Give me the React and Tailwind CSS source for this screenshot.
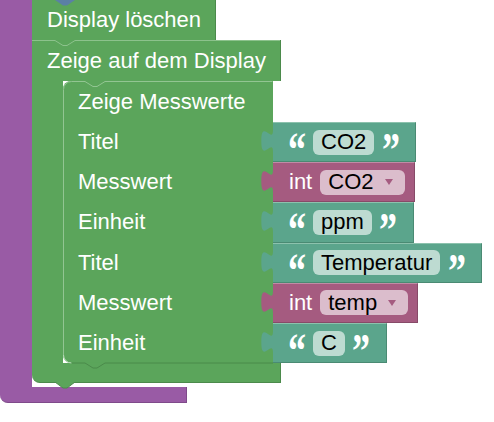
import React from "react";

// Blockly-Arbeitsfläche: verschachtelte Blöcke
const Tab = ({ fill }) => (
  <svg
    className="absolute left-[-12px] top-[7px] overflow-visible"
    width="13"
    height="23"
  >
    <path d="M12,0 c0,14.7 -11.7,-11.7 -11.7,11 s11.7,-3.7 11.7,11 Z" fill={fill} />
  </svg>
);

const Quote = ({ children, w }) => (
  <span className={`flex justify-center ${w}`}>
    <span className="inline-block scale-x-75 translate-y-[8px] font-['Liberation_Serif',serif] text-[48px] font-bold leading-none">
      {children}
    </span>
  </span>
);

const TextBlock = ({ text }) => (
  <div className="relative flex h-[40.2px] items-center border-y border-r border-t-[#8cc2ad] border-b-[#4a8a73] border-r-[#4a8a73] bg-[#5ba58c] pl-[17px] pr-[17px]">
    <Tab fill="#5ba58c" />
    <Quote w="w-[13px]">“</Quote>
    <span className="ml-[10px] flex h-[25px] items-center rounded-[6px] bg-[#bddbd1] px-[8px] text-black">
      {text}
    </span>
    <span className="ml-[9px]">
      <Quote w="w-[15px]">”</Quote>
    </span>
  </div>
);

const VarBlock = ({ text }) => (
  <div className="relative flex h-[40.2px] items-center border-y border-r border-t-[#c08ca6] border-b-[#874a68] border-r-[#874a68] bg-[#a55b80] pl-[16px] pr-[9px]">
    <Tab fill="#a55b80" />
    <span>int</span>
    <span className="ml-[8px] flex h-[25px] items-center rounded-[6px] bg-[#dbbdcc] pl-[8px] pr-[12px] text-black">
      {text}
      <svg className="ml-[11px]" width="8" height="6">
        <path d="M0,0 H8 L4,6 Z" fill="#a55b80" />
      </svg>
    </span>
  </div>
);

const rows = [
  { label: "Titel", kind: "text", value: "CO2" },
  { label: "Messwert", kind: "var", value: "CO2" },
  { label: "Einheit", kind: "text", value: "ppm" },
  { label: "Titel", kind: "text", value: "Temperatur" },
  { label: "Messwert", kind: "var", value: "temp" },
  { label: "Einheit", kind: "text", value: "C" },
];

export default function App() {
  return (
    <div className="relative h-[422px] w-[494px] overflow-hidden bg-white font-['Liberation_Sans',Arial,sans-serif] text-[22px] leading-none text-white">
      <div className="flex w-max flex-col">
        <div className="flex">
          <div className="w-[32px] shrink-0 bg-[#995ba5]" />
          <div className="flex flex-col">
            {/* Display löschen */}
            <div className="relative flex h-[40px] w-[184px] items-center border-r border-[#4b8a4b] bg-[#5ba55b] pl-[15px]">
              Display löschen
              <svg className="absolute left-[23px] top-0" width="20" height="6">
                <polygon points="0,0 20,0 12,5.5 8,5.5" fill="#5b80a5" />
              </svg>
            </div>

            {/* Zeige auf dem Display */}
            <div className="relative flex flex-col">
              <div className="flex h-[41px] w-[249px] items-center border-r border-[#4b8a4b] bg-[#5ba55b] pl-[15px]">
                Zeige auf dem Display
              </div>
              <div className="flex">
                <div className="w-[31px] shrink-0 bg-[#5ba55b]" />
                <div className="relative flex flex-col">
                  <div className="flex h-[41px] w-[210px] items-center rounded-tl-[8px] bg-[#5ba55b] pl-[15px]">
                    Zeige Messwerte
                  </div>
                  {rows.map((r, i) => (
                    <div key={i} className="flex">
                      <div
                        className={`flex h-[40.2px] w-[210px] items-center bg-[#5ba55b] pl-[15px] ${
                          i === rows.length - 1 ? "rounded-bl-[8px]" : ""
                        }`}
                      >
                        {r.label}
                      </div>
                      {r.kind === "text" ? <TextBlock text={r.value} /> : <VarBlock text={r.value} />}
                    </div>
                  ))}
                  <svg className="pointer-events-none absolute left-0 top-0 overflow-visible" width="210" height="282">
                    <path
                      d="M0.5,274 V8.5 A8,8 0 0 1 8.5,0.5 H22 L30,5.5 H34 L42,0.5 H209.5"
                      fill="none"
                      stroke="#92c592"
                      strokeWidth="1"
                    />
                    <path d="M0.5,274 A8,8 0 0 0 8.5,282" fill="none" stroke="#b9dcb9" strokeWidth="1" />
                    <path d="M22,281.5 L30,287 H34 L42,281.5 Z" fill="#5ba55b" />
                    <path
                      d="M8.5,282 H22 L30,287 H34 L42,282 H210"
                      fill="none"
                      stroke="#4b8a4b"
                      strokeWidth="1"
                    />
                  </svg>
                </div>
              </div>
              <div className="h-[20px] w-[249px] rounded-bl-[8px] border-b border-r border-[#4b8a4b] bg-[#5ba55b]" />
              <svg className="pointer-events-none absolute left-0 top-0 overflow-visible" width="249" height="10">
                <path
                  d="M0,0.5 H23 L31,5.5 H35 L43,0.5 H248"
                  fill="none"
                  stroke="#8cc28c"
                  strokeWidth="1"
                />
              </svg>
              <svg className="absolute bottom-[-6px] left-[23px]" width="20" height="7">
                <path d="M0,0 L8,6 H12 L20,0 Z" fill="#5ba55b" />
                <path d="M0,0 L8,6 H12 L20,0" fill="none" stroke="#4b8a4b" strokeWidth="1" />
              </svg>
            </div>
          </div>
        </div>
        <div className="h-[4px] w-[32px] bg-[#995ba5]" />
        <div className="h-[16px] w-[187px] rounded-bl-[8px] border-b border-r border-[#7f4a8a] bg-[#995ba5]" />
      </div>
    </div>
  );
}
